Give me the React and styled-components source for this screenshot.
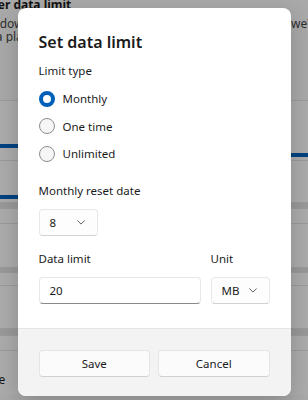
import styled, { createGlobalStyle } from 'styled-components'

const GlobalStyle = createGlobalStyle`
  html, body {
    margin: 0;
    padding: 0;
  }
  body {
    font-family: "Segoe UI", "Noto Sans", sans-serif;
    background: #f3f3f3;
    color: #1b1b1b;
  }
`

const bgRows = [
  { id: 1, h: 60, bars: [{ top: 43, left: 22, w: 150 }, { top: 5, left: 200, w: 160 }] },
  { id: 2, h: 42, bars: [{ top: 34, left: 22, w: 130 }] },
  { id: 3, h: 6, band: true },
  { id: 4, h: 15 },
  { id: 5, h: 44 },
  { id: 6, h: 5, band: true },
  { id: 7, h: 13 },
  { id: 8, h: 43 },
  { id: 9, h: 7, band: true },
  { id: 10, h: 15 },
  { id: 11, h: 45, text: 'Save' },
]

function ChevronDown() {
  return (
    <svg width="8" height="5" viewBox="0 0 8 5" fill="none">
      <path d="M0.6 0.7L4 4.1L7.4 0.7" stroke="#606060" strokeWidth="1" strokeLinecap="round" strokeLinejoin="round" />
    </svg>
  )
}

export default function App() {
  const limitTypes = [
    { id: 'monthly', label: 'Monthly', checked: true },
    { id: 'once', label: 'One time' },
    { id: 'unlimited', label: 'Unlimited' },
  ]

  return (
    <Screen>
      <GlobalStyle />
      <BgPage>
        <BgTitle>Enter data limit</BgTitle>
        <BgLine $first>
          <span>Windows can help you stay within it.</span>
          <BgTail>we'll let you know</BgTail>
        </BgLine>
        <BgLine>
          <span>on a plan you set.</span>
        </BgLine>
        <BgRows>
          {bgRows.map((row) => (
            <BgRow key={row.id} $h={row.h} $band={row.band}>
              {row.bars &&
                row.bars.map((bar, i) => (
                  <UsageBar key={i} $top={bar.top} $left={bar.left} $w={bar.w} />
                ))}
              {row.text && <BgRowText>{row.text}</BgRowText>}
            </BgRow>
          ))}
        </BgRows>
      </BgPage>

      <Overlay>
        <Dialog>
          <Body>
            <Title>Set data limit</Title>
            <Label>Limit type</Label>
            <RadioGroup>
              {limitTypes.map((item) => (
                <RadioRow key={item.id}>
                  <RadioCircle $checked={item.checked} />
                  <span>{item.label}</span>
                </RadioRow>
              ))}
            </RadioGroup>

            <Label $space={13}>Monthly reset date</Label>
            <Select $w={59}>
              <span>8</span>
              <ChevronDown />
            </Select>

            <FieldRow>
              <Field $grow>
                <Label $space={13}>Data limit</Label>
                <Input>20</Input>
              </Field>
              <Field>
                <Label $space={13}>Unit</Label>
                <Select $w={59}>
                  <span>MB</span>
                  <ChevronDown />
                </Select>
              </Field>
            </FieldRow>
          </Body>
          <Footer>
            <Button>Save</Button>
            <Button>Cancel</Button>
          </Footer>
        </Dialog>
      </Overlay>
    </Screen>
  )
}

const Screen = styled.div`
  position: relative;
  width: 308px;
  height: 400px;
  overflow: hidden;
`

const BgPage = styled.div`
  width: 341px;
  margin-left: -22px;
  font-size: 12px;
`

const BgTitle = styled.div`
  margin-top: -3px;
  line-height: 16px;
  font-weight: 700;
`

const BgLine = styled.div`
  display: flex;
  margin-top: ${(p) => (p.$first ? 4 : 0)}px;
  line-height: 13px;
  white-space: nowrap;
  overflow: hidden;
  color: #444;
`

const BgTail = styled.span`
  margin-left: auto;
  flex: 0 0 28px;
  min-width: 0;
`

const BgRows = styled.div`
  margin-top: 57px;
  display: flex;
  flex-direction: column;
`

const BgRow = styled.div`
  height: ${(p) => p.$h}px;
  box-sizing: border-box;
  border-top: 1px solid #dedede;
  background: ${(p) => (p.$band ? '#dcdcdc' : '#f7f7f7')};
  display: flex;
  flex-direction: column;
  align-items: flex-start;
`

const UsageBar = styled.div`
  flex: none;
  height: 4px;
  width: ${(p) => p.$w}px;
  margin: ${(p) => p.$top}px 0 0 ${(p) => p.$left}px;
  background: #005fb8;
`

const BgRowText = styled.div`
  margin: 21px 0 0 1px;
  line-height: 16px;
`

const Overlay = styled.div`
  position: absolute;
  inset: 0;
  background: rgba(0, 0, 0, 0.3);
  display: flex;
  justify-content: center;
  align-items: flex-start;
  padding-top: 8px;
`

const Dialog = styled.div`
  width: 273px;
  height: 388px;
  background: #ffffff;
  border-radius: 8px;
  box-shadow: 0 8px 24px rgba(0, 0, 0, 0.2);
  display: flex;
  flex-direction: column;
  overflow: hidden;
`

const Body = styled.div`
  flex: 1;
  padding: 20px 21px 0;
  display: flex;
  flex-direction: column;
  align-items: flex-start;
`

const Title = styled.h2`
  margin: 0 0 5px;
  font-size: 16px;
  line-height: 28px;
  font-weight: 600;
`

const Label = styled.div`
  margin: ${(p) => p.$space || 0}px 0 8px;
  font-size: 11.5px;
  line-height: 20px;
`

const RadioGroup = styled.div`
  display: flex;
  flex-direction: column;
  margin-top: -4px;
`

const RadioRow = styled.label`
  display: flex;
  align-items: center;
  gap: 8px;
  height: 27.5px;
  font-size: 11.5px;
`

const RadioCircle = styled.span`
  box-sizing: border-box;
  width: 16px;
  height: 16px;
  border-radius: 50%;
  background: ${(p) => (p.$checked ? '#ffffff' : '#f6f6f6')};
  border: ${(p) => (p.$checked ? '4.5px solid #005fb8' : '1px solid #8d8d8d')};
`

const Select = styled.div`
  box-sizing: border-box;
  width: ${(p) => p.$w}px;
  height: 27px;
  padding: 0 12px 0 10px;
  display: flex;
  align-items: center;
  justify-content: space-between;
  font-size: 11.5px;
  background: #fdfdfd;
  border: 1px solid #e8e8e8;
  border-bottom-color: #d2d2d2;
  border-radius: 4px;
`

const FieldRow = styled.div`
  display: flex;
  gap: 10px;
  width: 100%;
`

const Field = styled.div`
  display: flex;
  flex-direction: column;
  flex: ${(p) => (p.$grow ? 1 : 'none')};
`

const Input = styled.div`
  box-sizing: border-box;
  height: 27px;
  padding: 0 10px;
  display: flex;
  align-items: center;
  font-size: 11.5px;
  background: #ffffff;
  border: 1px solid #e8e8e8;
  border-bottom: 1px solid #8a8a8a;
  border-radius: 4px;
`

const Footer = styled.div`
  height: 68px;
  box-sizing: border-box;
  padding: 21px 21px 0;
  display: grid;
  grid-template-columns: 1fr 1fr;
  gap: 8px;
  align-items: start;
  background: #f3f3f3;
  border-top: 1px solid #e5e5e5;
`

const Button = styled.button`
  height: 27px;
  font-family: inherit;
  font-size: 11.5px;
  color: #1b1b1b;
  background: #fbfbfb;
  border: 1px solid #e5e5e5;
  border-bottom-color: #cfcfcf;
  border-radius: 4px;
`
